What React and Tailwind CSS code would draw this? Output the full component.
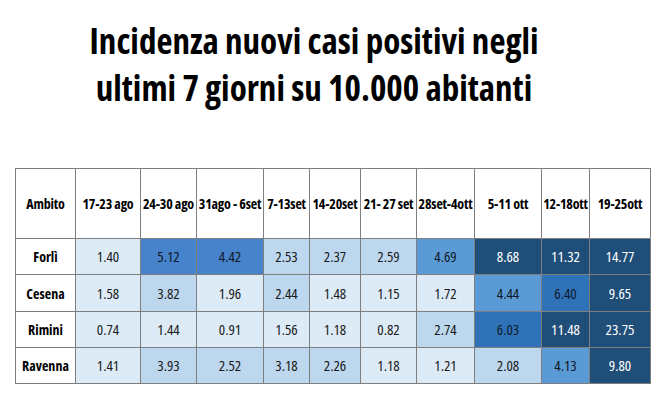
const cols = ["Ambito", "17-23 ago", "24-30 ago", "31ago - 6set", "7-13set", "14-20set", "21- 27 set", "28set-4ott", "5-11 ott", "12-18ott", "19-25ott"];

const C = {
  a: "bg-[#ddebf7] text-[#1a1a1a]",
  b: "bg-[#bdd7ee] text-[#1a1a1a]",
  m: "bg-[#5b9bd5] text-[#111827]",
  n: "bg-[#4783cb] text-[#111827]",
  o: "bg-[#2f72b8] text-[#0f1a2e]",
  d: "bg-[#1f4e79] text-white",
};

const rows = [
  ["Forlì", [["1.40", "a"], ["5.12", "n"], ["4.42", "n"], ["2.53", "b"], ["2.37", "b"], ["2.59", "b"], ["4.69", "m"], ["8.68", "d"], ["11.32", "d"], ["14.77", "d"]]],
  ["Cesena", [["1.58", "a"], ["3.82", "b"], ["1.96", "a"], ["2.44", "b"], ["1.48", "a"], ["1.15", "a"], ["1.72", "a"], ["4.44", "m"], ["6.40", "o"], ["9.65", "d"]]],
  ["Rimini", [["0.74", "a"], ["1.44", "a"], ["0.91", "a"], ["1.56", "a"], ["1.18", "a"], ["0.82", "a"], ["2.74", "b"], ["6.03", "o"], ["11.48", "d"], ["23.75", "d"]]],
  ["Ravenna", [["1.41", "a"], ["3.93", "b"], ["2.52", "b"], ["3.18", "b"], ["2.26", "b"], ["1.18", "a"], ["1.21", "a"], ["2.08", "b"], ["4.13", "m"], ["9.80", "d"]]],
];

export default function App() {
  return (
    <div className="w-[660px] h-[400px] bg-white overflow-hidden font-['Open_Sans',sans-serif] font-stretch-condensed">
      <div className="pt-[17px] pr-[32px] text-center text-[35px] leading-[47px] font-bold text-black">
        <div>Incidenza nuovi casi positivi negli</div>
        <div>ultimi 7 giorni su 10.000 abitanti</div>
      </div>
      <div className="mt-[57px] ml-[15px] w-[636px] grid grid-cols-[59px_64px_55px_66px_45px_50px_55px_57px_66px_47px_60px] grid-rows-[69px_35px_36px_35px_35px] gap-px bg-[#7f7f7f] border border-[#7f7f7f]">
        {cols.map((c) => (
          <div key={c} className="bg-white flex items-center justify-center text-[14px] font-bold text-black whitespace-nowrap tracking-[-0.2px]">
            {c}
          </div>
        ))}
        {rows.map(([name, cells]) => (
          <>
            <div key={name} className="bg-white flex items-center justify-center text-[14px] font-bold text-black">
              {name}
            </div>
            {cells.map(([v, k], i) => (
              <div key={name + i} className={`flex items-center justify-center text-[15px] ${C[k]}`}>
                {v}
              </div>
            ))}
          </>
        ))}
      </div>
    </div>
  );
}
